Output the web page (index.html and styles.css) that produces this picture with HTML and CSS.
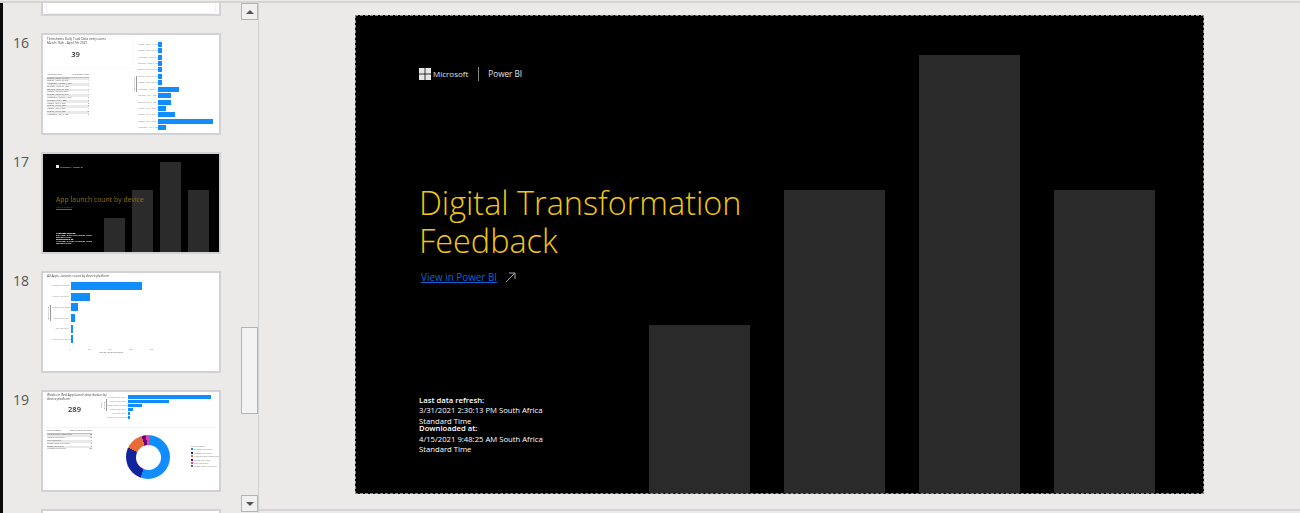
FILE: index.html
```html
<!DOCTYPE html>
<html>

<head>
	<title>Digital Transformation Feedback</title>
	<meta name="viewport" content="width=device-width, initial-scale=1.0">
	<link rel="stylesheet" href="styles.css">
</head>

<body>
	<div class="topline"></div>
	<div class="window">

		<!-- slide sorter on the left -->
		<div class="sidebar">
			<div class="thumbs">

				<div class="thumb-row">
					<span class="thumb-num"></span>
					<div class="thumb thumb-white"><div class="prev-frame"></div></div>
				</div>

				<div class="thumb-row">
					<span class="thumb-num">16</span>
					<div class="thumb thumb-white report-16">
						<div class="col-left">
							<div class="card card-kpi">
								<p class="mini-title">Timesheets Daily Total Data entry users<br>March 16th - April 7th 2021</p>
								<p class="kpi">39</p>
							</div>
							<div class="mini-table table-16">
								<div class="mini-head"><span>Application Date</span><span>Sum of Entry Users</span></div>
								<div class="mini-line"><span>Tuesday, March 16, 2021</span><span>1</span></div>
								<div class="mini-line"><span>Tuesday, March 23, 2021</span><span>1</span></div>
								<div class="mini-line"><span>Wednesday, March 24, 2021</span><span>1</span></div>
								<div class="mini-line"><span>Thursday, March 25, 2021</span><span>1</span></div>
								<div class="mini-line"><span>Saturday, March 27, 2021</span><span>1</span></div>
								<div class="mini-line"><span>Monday, March 29, 2021</span><span>1</span></div>
								<div class="mini-line"><span>Tuesday, March 30, 2021</span><span>1</span></div>
								<div class="mini-line"><span>Wednesday, March 31, 2021</span><span>5</span></div>
								<div class="mini-line"><span>Thursday, April 1, 2021</span><span>3</span></div>
								<div class="mini-line"><span>Monday, April 5, 2021</span><span>3</span></div>
								<div class="mini-line"><span>Tuesday, April 6, 2021</span><span>2</span></div>
								<div class="mini-line"><span>Monday, April 5, 2021</span><span>4</span></div>
								<div class="mini-line"><span>Tuesday, April 6, 2021</span><span>13</span></div>
								<div class="mini-line"><span>Wednesday, April 7, 2021</span><span>2</span></div>
							</div>
						</div>
						<span class="axis-v">Application Date</span>
						<div class="hbars hbars-16">
							<div class="hbar"><span>Tuesday, March 16, 2021</span><i style="width:4px"></i></div>
							<div class="hbar"><span>Tuesday, March 23, 2021</span><i style="width:4px"></i></div>
							<div class="hbar"><span>Wednesday, March 24, 2021</span><i style="width:4px"></i></div>
							<div class="hbar"><span>Thursday, March 25, 2021</span><i style="width:4px"></i></div>
							<div class="hbar"><span>Saturday, March 27, 2021</span><i style="width:4px"></i></div>
							<div class="hbar"><span>Monday, March 29, 2021</span><i style="width:4px"></i></div>
							<div class="hbar"><span>Tuesday, March 30, 2021</span><i style="width:4px"></i></div>
							<div class="hbar"><span>Wednesday, March 31, 2021</span><i style="width:21px"></i></div>
							<div class="hbar"><span>Thursday, April 1, 2021</span><i style="width:13px"></i></div>
							<div class="hbar"><span>Saturday, April 3, 2021</span><i style="width:13px"></i></div>
							<div class="hbar"><span>Sunday, April 4, 2021</span><i style="width:8px"></i></div>
							<div class="hbar"><span>Monday, April 5, 2021</span><i style="width:17px"></i></div>
							<div class="hbar"><span>Tuesday, April 6, 2021</span><i style="width:55px"></i></div>
							<div class="hbar"><span>Wednesday, April 7, 2021</span><i style="width:8px"></i></div>
						</div>
					</div>
				</div>

				<div class="thumb-row">
					<span class="thumb-num">17</span>
					<div class="thumb thumb-dark">
						<div class="mini-bars">
							<i class="mb-1"></i><i class="mb-2"></i><i class="mb-3"></i><i class="mb-2"></i>
						</div>
						<div class="mini-brand"><b></b><span>Microsoft | Power BI</span></div>
						<p class="mini-heading">App launch count by device</p>
						<p class="mini-link">View in Power BI</p>
						<p class="mini-meta"><b>Last data refresh:</b><br>3/31/2021 2:30:13 PM South Africa<br>Standard Time<br><b>Downloaded at:</b><br>4/15/2021 9:48:25 AM South Africa<br>Standard Time</p>
					</div>
				</div>

				<div class="thumb-row">
					<span class="thumb-num">18</span>
					<div class="thumb thumb-white report-18">
						<p class="mini-title">All Apps - launch count by device platform</p>
						<div class="chart-18">
							<span class="axis-v">Device platform</span>
							<div class="hbars hbars-18">
								<div class="hbar"><span>Windows Web/Player</span><i style="width:71px"></i></div>
								<div class="hbar"><span>Android Web/Player</span><i style="width:19px"></i></div>
								<div class="hbar"><span>Android Tablet Native/Player</span><i style="width:7px"></i></div>
								<div class="hbar"><span>iPhone Web/Player</span><i style="width:4px"></i></div>
								<div class="hbar"><span>Mac Web/Player</span><i style="width:1.5px"></i></div>
								<div class="hbar"><span>iPhone Tablet Web/Player</span><i style="width:1.5px"></i></div>
							</div>
						</div>
						<div class="ticks-18"><span>0</span><span>100</span><span>200</span><span>300</span><span>400</span></div>
						<p class="axis-h">Sum of App launch count</p>
					</div>
				</div>

				<div class="thumb-row">
					<span class="thumb-num">19</span>
					<div class="thumb thumb-white report-19">
						<div class="top-19">
							<div class="kpi-19">
								<p class="mini-title">Weeks in Red App launch distribution by<br>device platform</p>
								<p class="kpi">289</p>
							</div>
							<span class="axis-v">Device platform</span>
							<div class="hbars hbars-19">
								<div class="hbar"><span>Windows Web/Player</span><i style="width:83px"></i></div>
								<div class="hbar"><span>Android Web/Player</span><i style="width:41px"></i></div>
								<div class="hbar"><span>Android Tablet Native/Player</span><i style="width:14px"></i></div>
								<div class="hbar"><span>iPhone Web/Player</span><i style="width:5px"></i></div>
								<div class="hbar"><span>Mac Web/Player</span><i style="width:2px"></i></div>
								<div class="hbar"><span>iPhone Tablet Web/Player</span><i style="width:1.5px"></i></div>
							</div>
						</div>
						<div class="bottom-19">
							<div class="mini-table table-19">
								<div class="mini-head"><span>Device Platform</span><span>Sum of App launch count</span></div>
								<div class="mini-line"><span>Android Tablet Native/Player</span><span>23</span></div>
								<div class="mini-line"><span>Android Web/Player</span><span>68</span></div>
								<div class="mini-line"><span>Mac Web/Player</span><span>4</span></div>
								<div class="mini-line"><span>iPhone Tablet Web/Player</span><span>3</span></div>
								<div class="mini-line"><span>iPhone Web/Player</span><span>9</span></div>
								<div class="mini-line"><span>Windows Web/Player</span><span>182</span></div>
							</div>
							<div class="donut"><div class="donut-hole"></div></div>
							<div class="legend">
								<p>Device Platform</p>
								<div><i class="c-blue"></i>Windows Web/Player</div>
								<div><i class="c-navy"></i>Android Web/Player</div>
								<div><i class="c-orange"></i>Android Tablet Native/Player</div>
								<div><i class="c-purple"></i>iPhone Web/Player</div>
								<div><i class="c-pink"></i>Mac Web/Player</div>
								<div><i class="c-lilac"></i>iPhone Tablet Web/Player</div>
							</div>
						</div>
					</div>
				</div>

				<div class="thumb-row">
					<span class="thumb-num">20</span>
					<div class="thumb thumb-white"></div>
				</div>
			</div>

			<div class="scrollbar">
				<button class="scroll-btn" type="button"><span class="arrow-up"></span></button>
				<div class="scroll-thumb"></div>
				<button class="scroll-btn" type="button"><span class="arrow-down"></span></button>
			</div>
		</div>

		<!-- big slide -->
		<div class="main">
			<div class="slide">
				<div class="slide-bars">
					<div class="bar bar-1"></div>
					<div class="bar bar-2"></div>
					<div class="bar bar-3"></div>
					<div class="bar bar-2"></div>
				</div>

				<div class="brand">
					<svg class="ms-logo" width="12" height="12" viewBox="0 0 12 12">
						<rect width="5.6" height="5.6" fill="#e6e6e6"/>
						<rect x="6.4" width="5.6" height="5.6" fill="#e6e6e6"/>
						<rect y="6.4" width="5.6" height="5.6" fill="#e6e6e6"/>
						<rect x="6.4" y="6.4" width="5.6" height="5.6" fill="#e6e6e6"/>
					</svg>
					<span class="brand-ms">Microsoft</span>
					<span class="brand-line"></span>
					<span class="brand-pbi">Power BI</span>
				</div>

				<h1 class="title">Digital Transformation<br>Feedback</h1>

				<div class="view-link">
					<a href="#">View in Power BI</a>
					<svg width="11" height="11" viewBox="0 0 11 11">
						<path d="M1 10 L10 1 M4 1 H10 V7" fill="none" stroke="#a8a8a8" stroke-width="1"/>
					</svg>
				</div>

				<div class="meta">
					<p><b>Last data refresh:</b><br>3/31/2021 2:30:13 PM South Africa Standard Time</p>
					<p class="meta-second"><b>Downloaded at:</b><br>4/15/2021 9:48:25 AM South Africa Standard Time</p>
				</div>
			</div>
		</div>
	</div>
</body>

</html>
```
FILE: styles.css
```css
* {
	box-sizing: border-box;
}

html, body {
	margin: 0;
	height: 513px;
	overflow: hidden;
	background: #ebeae8;
	font-family: "Open Sans", "Liberation Sans", sans-serif;
}

p, h1 {
	margin: 0;
}

.topline {
	height: 3px;
	background: #ebeae8;
	border-bottom: 2px solid #d6d4d1;
}

.window {
	display: flex;
	height: 510px;
}

/* sidebar */

.sidebar {
	display: flex;
	width: 259px;
	border-left: 3px solid #0a0a0a;
	border-right: 1px solid #cfd0d2;
}

.thumbs {
	width: 238px;
	height: 510px;
	overflow: hidden;
}

.thumb-row {
	display: flex;
	height: 102px;
	margin-bottom: 17px;
}

/* only the bottom of slide 15 is still on screen */
.thumb-row:first-child {
	margin-top: -89px;
}

.thumb-num {
	width: 38px;
	padding: 2px 0 0 10px;
	font-size: 14px;
	line-height: 16px;
	color: #555;
}

.thumb {
	width: 180px;
	height: 102px;
	border: 2px solid #d2d2d6;
	overflow: hidden;
}

.thumb-white {
	background: #fff;
}

/* the real thumbnails are downscaled bitmaps, so soften what is inside them */
.thumb > * {
	filter: blur(0.4px);
}

.prev-frame {
	height: 98px;
	margin: 0 3px;
	border: 1px solid #f0f0f0;
	border-radius: 2px;
}

/* tiny report parts */

.mini-title {
	font-size: 3.2px;
	line-height: 3.6px;
	color: #444;
}

.kpi {
	font-size: 7.5px;
	line-height: 9px;
	font-weight: 600;
	color: #333;
	text-align: center;
}

.axis-v {
	writing-mode: vertical-rl;
	transform: rotate(180deg);
	font-size: 1.8px;
	color: #555;
	text-align: center;
	border-left: 0.5px solid #999;
}

.hbars {
	display: flex;
	flex-direction: column;
}

.hbar {
	display: flex;
	align-items: center;
	gap: 2px;
}

.hbar span {
	flex: none;
	font-size: 1.8px;
	color: #888;
	text-align: right;
	white-space: nowrap;
}

.hbar i {
	display: block;
	flex: none;
	background: #118dff;
}

.mini-table {
	font-size: 1.9px;
	color: #555;
}

.mini-head, .mini-line {
	display: flex;
	justify-content: space-between;
	white-space: nowrap;
}

.mini-head {
	border-bottom: 0.5px solid #a8c4e0;
}

.mini-line:nth-child(even) {
	background: #e9e9e9;
}

/* slide 16 */

.report-16 {
	display: flex;
	padding: 2px 0 0 2px;
}

.col-left {
	width: 87px;
	flex: none;
}

.card-kpi {
	height: 31px;
	padding: 1px 2px;
	box-shadow: 0 0 1px #ddd;
}

.card-kpi .kpi {
	margin-top: 5px;
	padding-right: 26px;
}

.table-16 {
	width: 42px;
	margin: 6px 0 0 2px;
	line-height: 2.8px;
}

.table-16 .mini-head {
	height: 3.5px;
}

.report-16 .axis-v {
	height: 16px;
	margin: 39px 0 0 1px;
	flex: none;
}

.hbars-16 {
	margin: 4px 0 0 1px;
}

.hbars-16 .hbar {
	height: 6.43px;
}

.hbars-16 .hbar span {
	width: 18px;
}

.hbars-16 .hbar i {
	height: 5px;
}

/* slide 17 */

.thumb-dark {
	position: relative;
	display: flex;
	flex-direction: column;
	padding: 11px 0 0 13px;
	background: #000;
}

.mini-bars {
	position: absolute;
	right: 10px;
	bottom: 0;
	display: flex;
	align-items: flex-end;
	gap: 7px;
}

.mini-bars i {
	display: block;
	width: 21px;
	background-color: #2b2b2b;
	background-image: radial-gradient(#3a3a3a 0.5px, transparent 0.6px);
	background-size: 2px 2px;
}

.mb-1 { height: 34px; }
.mb-2 { height: 62px; }
.mb-3 { height: 90px; }

.mini-brand {
	position: relative;
	display: flex;
	align-items: center;
	gap: 1px;
	height: 3px;
	font-size: 2.4px;
	color: #ddd;
}

.mini-brand b {
	width: 3px;
	height: 3px;
	background: #e6e6e6;
}

.mini-heading {
	position: relative;
	margin-top: 27px;
	font-size: 6.9px;
	line-height: 10px;
	font-weight: 400;
	color: #8d7408;
	white-space: nowrap;
}

.mini-link {
	position: relative;
	width: 16px;
	margin-top: 1px;
	font-size: 2.2px;
	line-height: 3px;
	color: #1d6fc4;
	border-bottom: 1px solid #1d6fc4;
	white-space: nowrap;
}

.mini-meta {
	position: relative;
	margin-top: 23px;
	font-size: 2.2px;
	line-height: 2.1px;
	font-weight: 600;
	color: #fff;
	white-space: nowrap;
}

/* slide 18 */

.report-18 {
	padding: 2px 0 0 4px;
}

.chart-18 {
	display: flex;
	align-items: center;
	margin-top: 2px;
}

.chart-18 .axis-v {
	height: 16px;
	margin-right: 1px;
}

.hbars-18 .hbar {
	height: 10.7px;
}

.hbars-18 .hbar span {
	width: 17px;
}

.hbars-18 .hbar i {
	height: 8px;
}

.ticks-18 {
	display: flex;
	justify-content: space-between;
	width: 84px;
	margin: 4px 0 0 22px;
	font-size: 1.8px;
	line-height: 2px;
	color: #888;
}

.axis-h {
	width: 84px;
	margin: 1px 0 0 22px;
	font-size: 2px;
	line-height: 2.4px;
	color: #555;
	text-align: center;
}

/* slide 19 */

.report-19 {
	padding: 2px 3px 0 4px;
}

.top-19 {
	display: flex;
	height: 32px;
}

.kpi-19 {
	width: 50px;
	flex: none;
	white-space: nowrap;
}

.kpi-19 .kpi {
	margin: 4px -5px 0 0;
}

.top-19 .axis-v {
	height: 12px;
	margin: 5px 0 0 3px;
}

.hbars-19 {
	margin-top: 1px;
}

.hbars-19 .hbar {
	height: 4.15px;
}

.hbars-19 .hbar span {
	width: 19px;
}

.hbars-19 .hbar i {
	height: 3.4px;
}

.bottom-19 {
	display: flex;
	height: 60px;
	margin-top: 1px;
	border-top: 1px solid #f2f2f2;
}

.table-19 {
	width: 45px;
	flex: none;
	margin-top: 2px;
	line-height: 2.9px;
}

.donut {
	display: flex;
	align-items: center;
	justify-content: center;
	flex: none;
	width: 44px;
	height: 44px;
	margin: 7px 0 0 34px;
	border-radius: 50%;
	background: conic-gradient(#e044a7 0deg 5deg, #118dff 5deg 200deg, #12239e 200deg 295deg, #e66c37 295deg 343deg, #6b007b 343deg 355deg, #e044a7 355deg 360deg);
}

.donut-hole {
	width: 25px;
	height: 25px;
	border-radius: 50%;
	background: #fff;
}

.legend {
	margin: 17px 0 0 21px;
	font-size: 1.9px;
	line-height: 3.4px;
	color: #777;
	white-space: nowrap;
}

.legend i {
	display: inline-block;
	width: 2px;
	height: 2px;
	margin-right: 1px;
}

.c-blue { background: #118dff; }
.c-navy { background: #12239e; }
.c-orange { background: #e66c37; }
.c-purple { background: #6b007b; }
.c-pink { background: #e044a7; }
.c-lilac { background: #744ec2; }

/* scrollbar */

.scrollbar {
	display: flex;
	flex-direction: column;
	width: 17px;
	height: 509px;
}

.scroll-btn {
	display: flex;
	align-items: center;
	justify-content: center;
	flex: none;
	width: 17px;
	height: 17px;
	padding: 0;
	background: #f0f0f0;
	border: 1px solid #b4b4b4;
}

.arrow-up, .arrow-down {
	width: 0;
	height: 0;
	border-left: 4px solid transparent;
	border-right: 4px solid transparent;
}

.arrow-up {
	border-bottom: 4px solid #555;
}

.arrow-down {
	border-top: 4px solid #555;
}

.scroll-thumb {
	height: 87px;
	margin-top: 307px;
	margin-bottom: auto;
	background: #f3f3f3;
	border: 1px solid #b4b4b4;
}

/* main area */

.main {
	flex: 1;
	height: 508px;
	padding: 12px 0 0 96px;
	border-bottom: 2px solid #d3d5d8;
}

.slide {
	position: relative;
	display: flex;
	flex-direction: column;
	width: 849px;
	height: 479px;
	padding: 51px 0 0 63px;
	background: #000;
	border: 1px dashed #8c8c8c;
}

.slide-bars {
	position: absolute;
	right: 48px;
	bottom: 0;
	display: flex;
	align-items: flex-end;
	gap: 34px;
}

.bar {
	width: 101px;
	background: #2a2a2a;
}

.bar-1 { height: 168px; }
.bar-2 { height: 303px; }
.bar-3 { height: 438px; }

.brand {
	position: relative;
	display: flex;
	align-items: center;
	height: 13px;
	font-size: 8px;
	color: #e0e0e0;
}

.ms-logo {
	flex: none;
}

.brand-ms {
	margin-left: 2px;
}

.brand-line {
	width: 1px;
	height: 14px;
	margin: 0 9px 0 10px;
	background: #8a8a8a;
}

.brand-pbi {
	font-size: 8.2px;
}

.title {
	position: relative;
	margin-top: 103px;
	font-size: 32.4px;
	line-height: 38px;
	font-weight: 300;
	color: #f2c811;
}

.view-link {
	position: relative;
	display: flex;
	align-items: center;
	gap: 8px;
	margin: 11px 0 0 2px;
	font-size: 9.9px;
	line-height: 14px;
}

.view-link a {
	color: #0f62d6;
}

.meta {
	position: relative;
	width: 130px;
	margin-top: 111px;
	font-size: 7.7px;
	line-height: 10.3px;
	color: #fff;
}

.meta b {
	font-weight: 600;
}

.meta-second {
	margin-top: -2.5px;
}
```
